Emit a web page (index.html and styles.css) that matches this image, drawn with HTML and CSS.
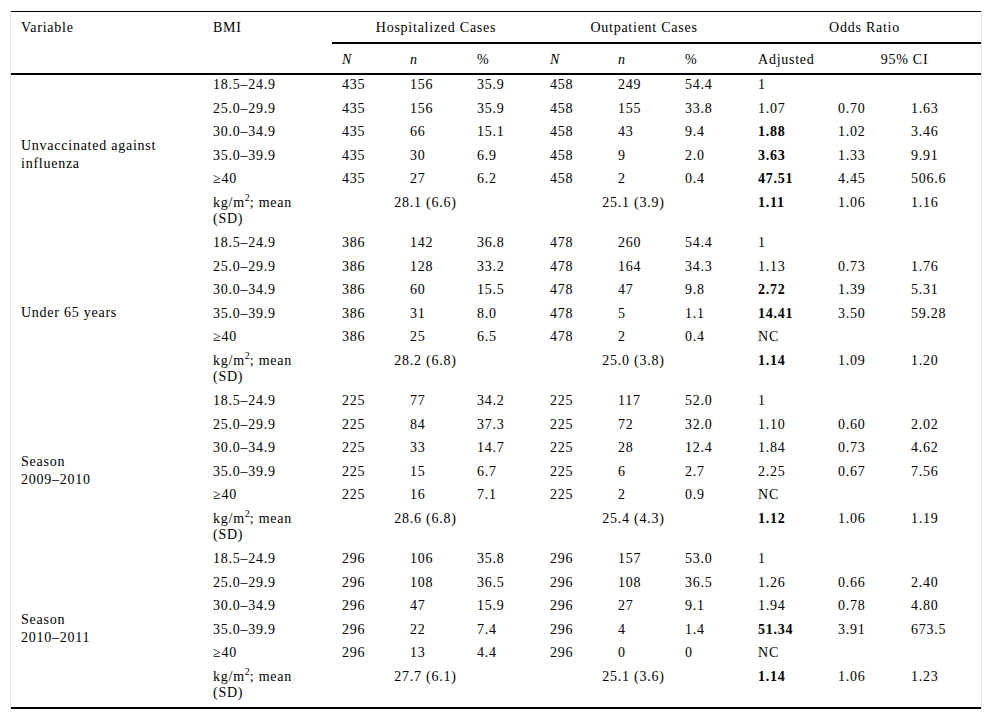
FILE: index.html
```html
<!DOCTYPE html>
<html>
<head>
<meta charset="utf-8">
<link rel="stylesheet" href="styles.css">
</head>
<body>
<div class="frame">
<table class="bmi">
<colgroup>
<col class="c-var"><col class="c-bmi">
<col class="c-n1"><col class="c-n2"><col class="c-pct">
<col class="c-n1"><col class="c-n2"><col class="c-pct">
<col class="c-adj"><col class="c-lo"><col class="c-hi">
</colgroup>
<thead>
<tr class="h1">
<th rowspan="2" class="hl">Variable</th>
<th rowspan="2" class="hl">BMI</th>
<th colspan="3" class="grp">Hospitalized Cases</th>
<th colspan="3" class="grp">Outpatient Cases</th>
<th colspan="3" class="grp">Odds Ratio</th>
</tr>
<tr class="h2">
<th><i>N</i></th><th><i>n</i></th><th>%</th>
<th><i>N</i></th><th><i>n</i></th><th>%</th>
<th>Adjusted</th><th colspan="2" class="ci">95% CI</th>
</tr>
</thead>
<tbody>
<tr><td rowspan="6" class="var">Unvaccinated against<br>influenza</td><td>18.5–24.9</td><td>435</td><td>156</td><td>35.9</td><td>458</td><td>249</td><td>54.4</td><td>1</td><td></td><td></td></tr>
<tr><td>25.0–29.9</td><td>435</td><td>156</td><td>35.9</td><td>458</td><td>155</td><td>33.8</td><td>1.07</td><td>0.70</td><td>1.63</td></tr>
<tr><td>30.0–34.9</td><td>435</td><td>66</td><td>15.1</td><td>458</td><td>43</td><td>9.4</td><td><b>1.88</b></td><td>1.02</td><td>3.46</td></tr>
<tr><td>35.0–39.9</td><td>435</td><td>30</td><td>6.9</td><td>458</td><td>9</td><td>2.0</td><td><b>3.63</b></td><td>1.33</td><td>9.91</td></tr>
<tr><td>≥40</td><td>435</td><td>27</td><td>6.2</td><td>458</td><td>2</td><td>0.4</td><td><b>47.51</b></td><td>4.45</td><td>506.6</td></tr>
<tr class="mean"><td>kg/m<sup>2</sup>; mean<br>(SD)</td><td colspan="3" class="m">28.1 (6.6)</td><td colspan="3" class="m">25.1 (3.9)</td><td><b>1.11</b></td><td>1.06</td><td>1.16</td></tr>

<tr><td rowspan="6" class="var">Under 65 years</td><td>18.5–24.9</td><td>386</td><td>142</td><td>36.8</td><td>478</td><td>260</td><td>54.4</td><td>1</td><td></td><td></td></tr>
<tr><td>25.0–29.9</td><td>386</td><td>128</td><td>33.2</td><td>478</td><td>164</td><td>34.3</td><td>1.13</td><td>0.73</td><td>1.76</td></tr>
<tr><td>30.0–34.9</td><td>386</td><td>60</td><td>15.5</td><td>478</td><td>47</td><td>9.8</td><td><b>2.72</b></td><td>1.39</td><td>5.31</td></tr>
<tr><td>35.0–39.9</td><td>386</td><td>31</td><td>8.0</td><td>478</td><td>5</td><td>1.1</td><td><b>14.41</b></td><td>3.50</td><td>59.28</td></tr>
<tr><td>≥40</td><td>386</td><td>25</td><td>6.5</td><td>478</td><td>2</td><td>0.4</td><td>NC</td><td></td><td></td></tr>
<tr class="mean"><td>kg/m<sup>2</sup>; mean<br>(SD)</td><td colspan="3" class="m">28.2 (6.8)</td><td colspan="3" class="m">25.0 (3.8)</td><td><b>1.14</b></td><td>1.09</td><td>1.20</td></tr>

<tr><td rowspan="6" class="var">Season<br>2009–2010</td><td>18.5–24.9</td><td>225</td><td>77</td><td>34.2</td><td>225</td><td>117</td><td>52.0</td><td>1</td><td></td><td></td></tr>
<tr><td>25.0–29.9</td><td>225</td><td>84</td><td>37.3</td><td>225</td><td>72</td><td>32.0</td><td>1.10</td><td>0.60</td><td>2.02</td></tr>
<tr><td>30.0–34.9</td><td>225</td><td>33</td><td>14.7</td><td>225</td><td>28</td><td>12.4</td><td>1.84</td><td>0.73</td><td>4.62</td></tr>
<tr><td>35.0–39.9</td><td>225</td><td>15</td><td>6.7</td><td>225</td><td>6</td><td>2.7</td><td>2.25</td><td>0.67</td><td>7.56</td></tr>
<tr><td>≥40</td><td>225</td><td>16</td><td>7.1</td><td>225</td><td>2</td><td>0.9</td><td>NC</td><td></td><td></td></tr>
<tr class="mean"><td>kg/m<sup>2</sup>; mean<br>(SD)</td><td colspan="3" class="m">28.6 (6.8)</td><td colspan="3" class="m">25.4 (4.3)</td><td><b>1.12</b></td><td>1.06</td><td>1.19</td></tr>

<tr><td rowspan="6" class="var">Season<br>2010–2011</td><td>18.5–24.9</td><td>296</td><td>106</td><td>35.8</td><td>296</td><td>157</td><td>53.0</td><td>1</td><td></td><td></td></tr>
<tr><td>25.0–29.9</td><td>296</td><td>108</td><td>36.5</td><td>296</td><td>108</td><td>36.5</td><td>1.26</td><td>0.66</td><td>2.40</td></tr>
<tr><td>30.0–34.9</td><td>296</td><td>47</td><td>15.9</td><td>296</td><td>27</td><td>9.1</td><td>1.94</td><td>0.78</td><td>4.80</td></tr>
<tr><td>35.0–39.9</td><td>296</td><td>22</td><td>7.4</td><td>296</td><td>4</td><td>1.4</td><td><b>51.34</b></td><td>3.91</td><td>673.5</td></tr>
<tr><td>≥40</td><td>296</td><td>13</td><td>4.4</td><td>296</td><td>0</td><td>0</td><td>NC</td><td></td><td></td></tr>
<tr class="mean"><td>kg/m<sup>2</sup>; mean<br>(SD)</td><td colspan="3" class="m">27.7 (6.1)</td><td colspan="3" class="m">25.1 (3.6)</td><td><b>1.14</b></td><td>1.06</td><td>1.23</td></tr>
</tbody>
</table>
</div>
</body>
</html>
```
FILE: styles.css
```css
html, body {
  margin: 0;
  padding: 0;
  background: #fff;
}
body {
  font-family: "Liberation Serif", "Times New Roman", serif;
  font-size: 14px;
  color: #000;
  letter-spacing: 0.75px;
}
.frame {
  margin: 11px 0 0 10px;
  width: 970px;
  border-left: 1px solid #e6e6e6;
  border-right: 1px solid #e6e6e6;
}
.bmi {
  width: 970px;
  table-layout: fixed;
  border-collapse: separate;
  border-spacing: 0;
  border-top: 1px solid #000;
  border-bottom: 2px solid #000;
}
.c-var { width: 192px; }
.c-bmi { width: 129px; }
.c-n1 { width: 68px; }
.c-n2 { width: 67px; }
.c-pct { width: 73px; }
.c-adj { width: 80px; }
.c-lo { width: 73px; }
.c-hi { width: 80px; }

th, td {
  text-align: left;
  vertical-align: top;
  font-weight: normal;
  line-height: 16px;
  padding: 2px 0 5.5px 10px;
  white-space: nowrap;
}
.h1 th {
  padding: 8px 0 6px 10px;
}
.h1 th.hl {
  border-bottom: 2px solid #000;
}
.h1 th.grp {
  text-align: center;
  padding-right: 10px;
  border-bottom: 2px solid #000;
}
.h2 th {
  padding: 8px 0 5px 10px;
  border-bottom: 2px solid #000;
}
.h2 th.ci {
  text-align: center;
  padding-right: 10px;
}
td.var {
  vertical-align: middle;
  line-height: 18.5px;
  padding-top: 8px;
  white-space: normal;
}
.mean td {
  padding-bottom: 6.5px;
}
td.m {
  text-align: center;
  padding-right: 31px;
}
sup {
  font-size: 10px;
  line-height: 0;
  vertical-align: 6px;
  letter-spacing: 0;
}
b {
  font-weight: bold;
}
```
